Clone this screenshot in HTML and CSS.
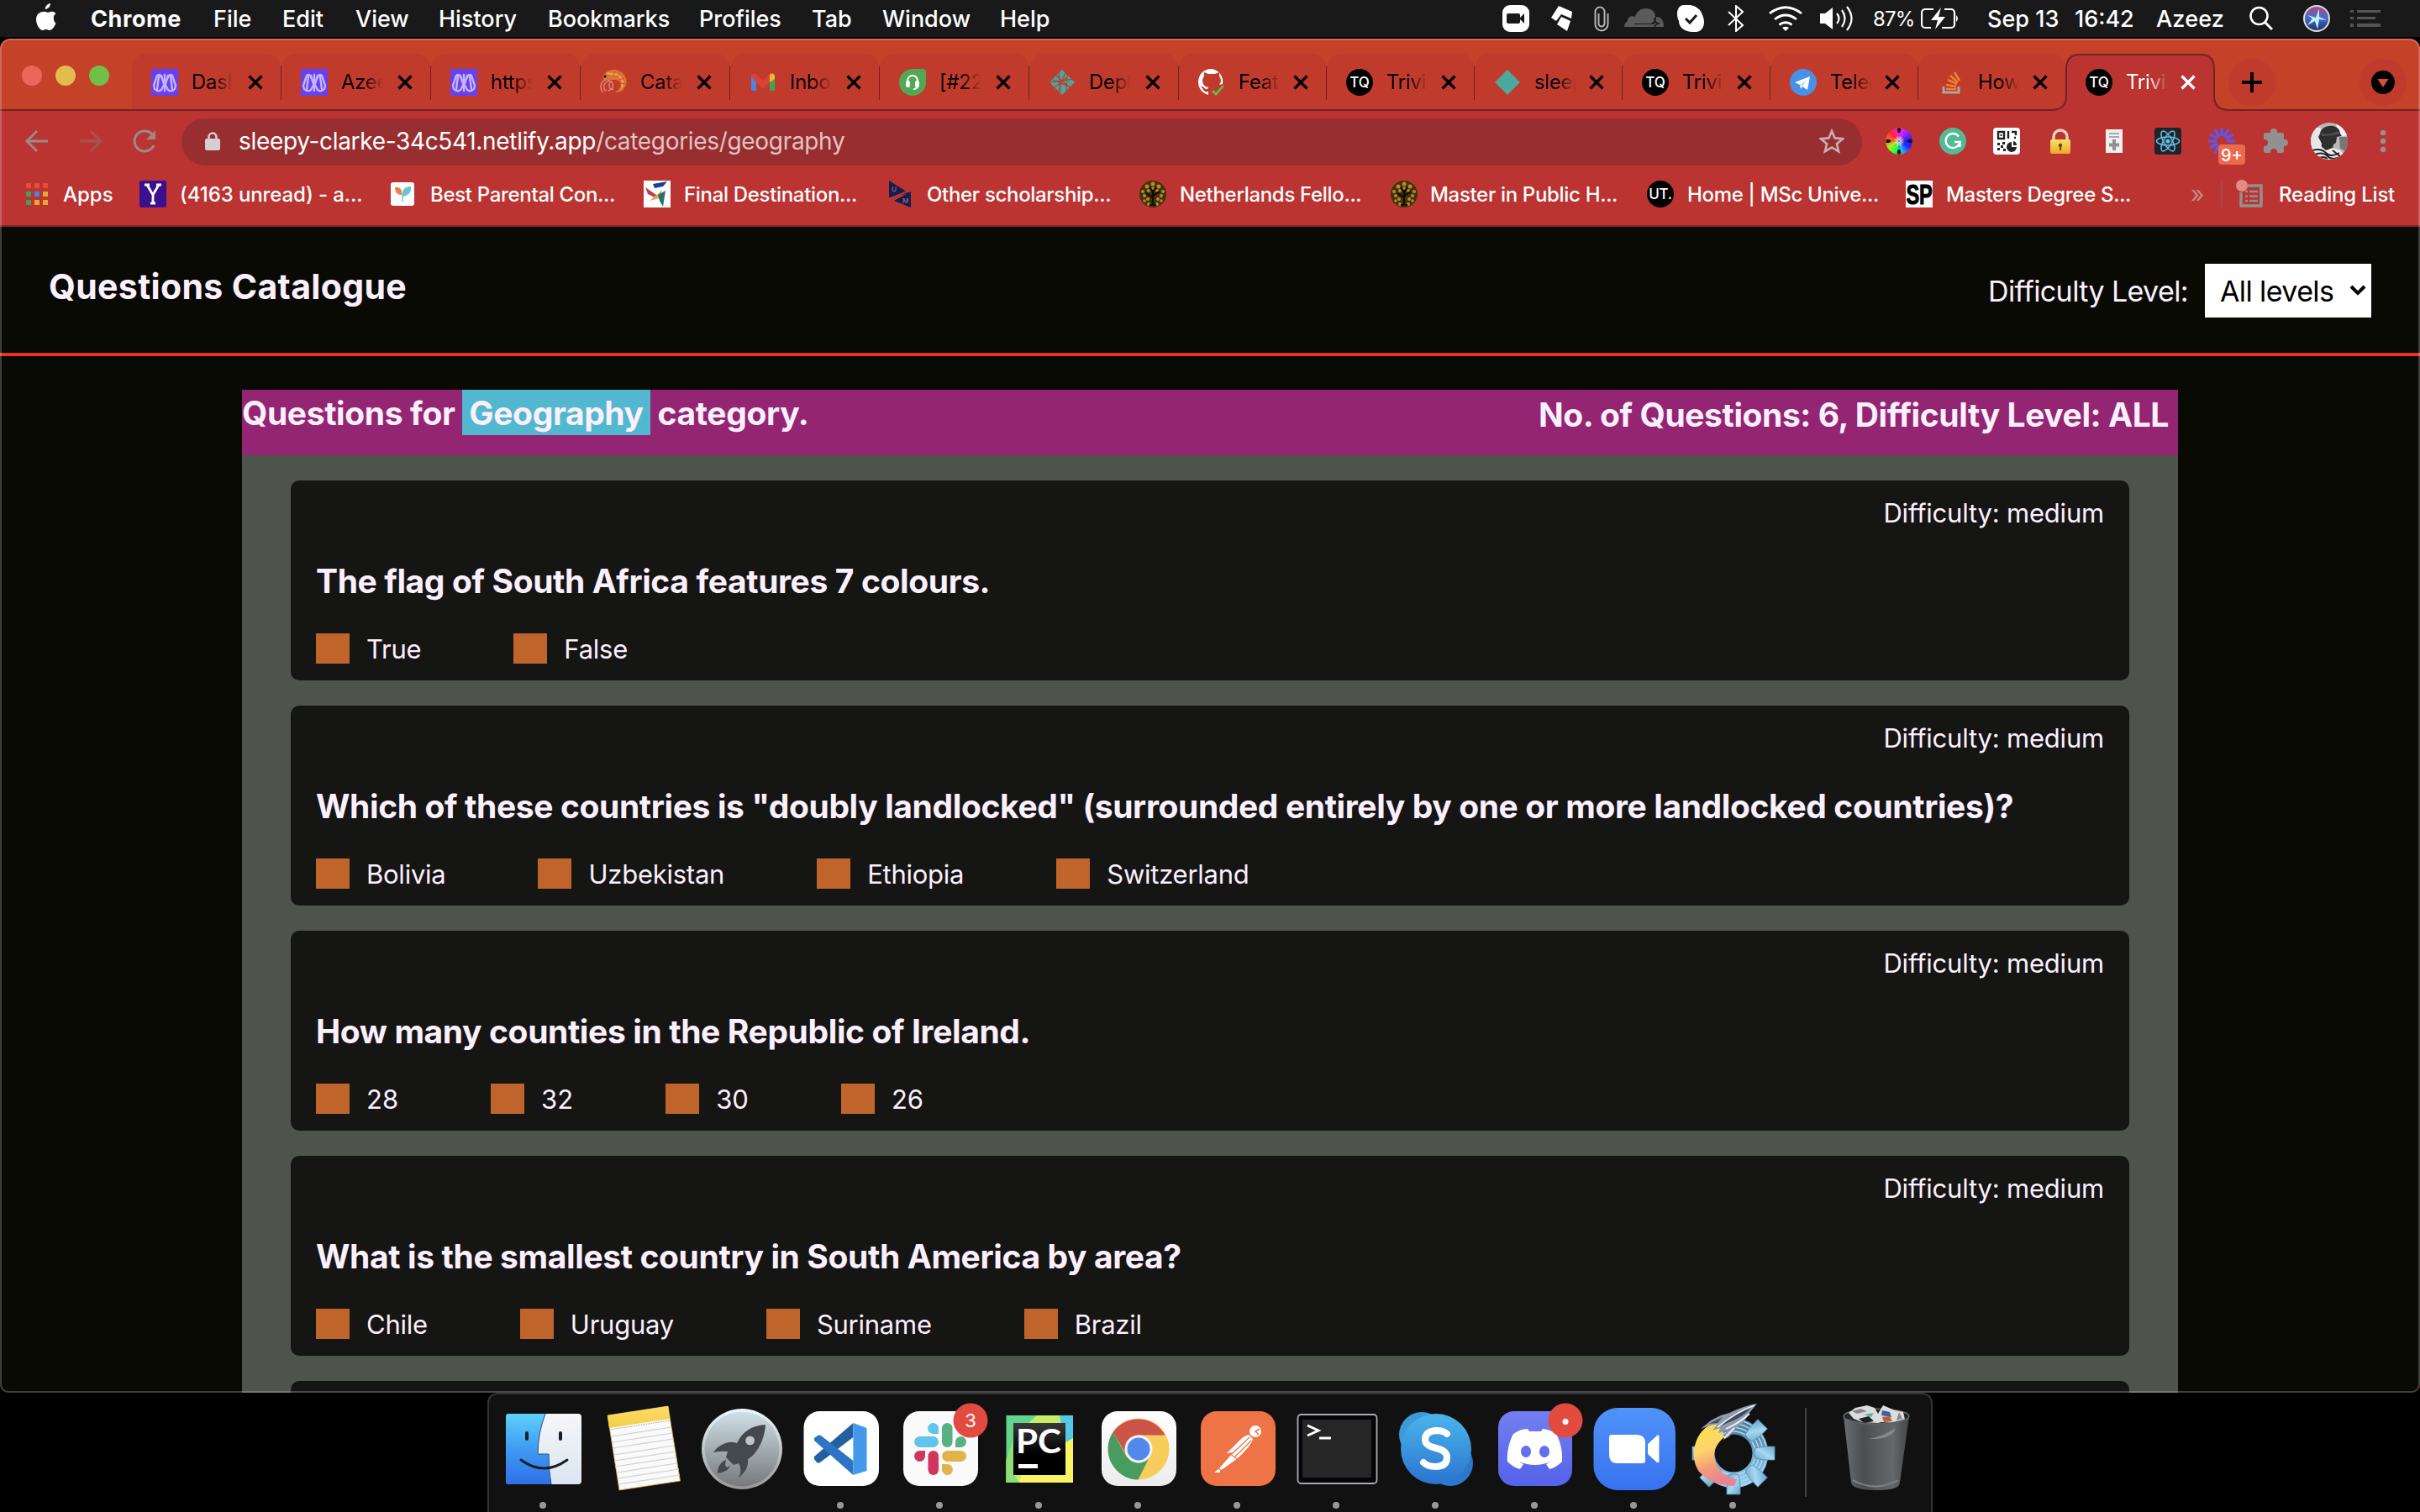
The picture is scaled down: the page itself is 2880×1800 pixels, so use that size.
FILE: index.html
```html
<!DOCTYPE html>
<html lang="en">
<head>
<meta charset="utf-8">
<title>Trivia Questions</title>
<link rel="stylesheet" href="styles.css">
</head>
<body>
<svg class="defs" width="0" height="0" aria-hidden="true">
  <defs>
    <linearGradient id="gFinderL" x1="0" y1="0" x2="0" y2="1"><stop offset="0" stop-color="#5fd0fa"/><stop offset=".5" stop-color="#3f9cf2"/><stop offset="1" stop-color="#2f6fe8"/></linearGradient>
    <linearGradient id="gFinderR" x1="0" y1="0" x2="0" y2="1"><stop offset="0" stop-color="#f6f6f8"/><stop offset="1" stop-color="#dbe5f1"/></linearGradient>
    <linearGradient id="gNotes" x1="0" y1="0" x2="0" y2="1"><stop offset="0" stop-color="#fbdc6c"/><stop offset="1" stop-color="#f6cd45"/></linearGradient>
    <linearGradient id="gLaunch" x1="0" y1="0" x2="0" y2="1"><stop offset="0" stop-color="#d0e0e8"/><stop offset="1" stop-color="#77797b"/></linearGradient>
    <linearGradient id="gLaunchRim" x1="0" y1="0" x2="0" y2="1"><stop offset="0" stop-color="#eaf8ff"/><stop offset="1" stop-color="#979797"/></linearGradient>
    <linearGradient id="gTile" x1="0" y1="0" x2="0" y2="1"><stop offset="0" stop-color="#fff"/><stop offset="1" stop-color="#ececec"/></linearGradient>
    <linearGradient id="gPc" x1="0" y1="0" x2="0" y2="1"><stop offset="0" stop-color="#383838"/><stop offset=".6" stop-color="#000"/></linearGradient>
    <linearGradient id="gSkype" x1="0" y1="0" x2="0" y2="1"><stop offset="0" stop-color="#4ab5ec"/><stop offset="1" stop-color="#2b74cf"/></linearGradient>
    <linearGradient id="gDiscord" x1="0" y1="0" x2="0" y2="1"><stop offset="0" stop-color="#737ff0"/><stop offset="1" stop-color="#5562ea"/></linearGradient>
    <linearGradient id="gZoom" x1="0" y1="0" x2="0" y2="1"><stop offset="0" stop-color="#4f93f8"/><stop offset="1" stop-color="#3872f0"/></linearGradient>
    <linearGradient id="gFlame" x1="0" y1="0" x2=".3" y2="1"><stop offset="0" stop-color="#fbe04a"/><stop offset=".45" stop-color="#fdd46c"/><stop offset=".75" stop-color="#f59a78"/><stop offset="1" stop-color="#ea8494"/></linearGradient>
    <linearGradient id="gTooth" x1="0" y1="0" x2="1" y2="1"><stop offset="0" stop-color="#6fa3c4"/><stop offset=".5" stop-color="#a4d8f3"/><stop offset="1" stop-color="#6ba4c8"/></linearGradient>
    <linearGradient id="gGear" x1="0" y1="0" x2="0" y2="1"><stop offset="0" stop-color="#4f7da0"/><stop offset="1" stop-color="#8fcbec"/></linearGradient>
    <linearGradient id="gBin" x1="0" y1="0" x2="1" y2="0"><stop offset="0" stop-color="#6b6f72"/><stop offset=".3" stop-color="#4a4e51"/><stop offset=".75" stop-color="#66696c"/><stop offset="1" stop-color="#434648"/></linearGradient>
    <linearGradient id="gLock" x1="0" y1="0" x2="0" y2="1"><stop offset="0" stop-color="#fbe06a"/><stop offset="1" stop-color="#eda923"/></linearGradient>
    <linearGradient id="gSiri" x1="0" y1="0" x2="0" y2="1"><stop offset="0" stop-color="#b8457f"/><stop offset=".5" stop-color="#3f6fd0"/><stop offset="1" stop-color="#1d2c60"/></linearGradient>
    <clipPath id="avatarClip"><circle cx="22" cy="22" r="22"/></clipPath>
  </defs>
  <symbol id="f-netlify-m" viewBox="0 0 32 32"><rect width="32" height="32" fill="#6740f2"/><g fill="none" stroke="#c3b5fb" stroke-width="2.400" stroke-linejoin="round" stroke-linecap="round"><path d="M7 8Q9 6 11 8L20 25Q24 28 28 24L29 20 25 8Q23 6 21 8L12 25Q8 28 4 24L3 20z"/><path d="M9 9L7 24M23 9l2 15M16 7v19M12 8l3 10M20 8l-3 10"/></g></symbol>
  <symbol id="f-tq" viewBox="0 0 32 32"><circle cx="16" cy="16" r="16"/><text x="16" y="22" text-anchor="middle" font-family="Inter,sans-serif" font-size="17" font-weight="500" fill="#fff">TQ</text></symbol>
  <symbol id="f-tree" viewBox="0 0 32 32"><circle cx="16" cy="16" r="16" fill="#41310f"/><g fill="#b68d22"><circle cx="9" cy="7" r="2.500"/><circle cx="16" cy="4" r="2.500"/><circle cx="23" cy="7" r="2.500"/><circle cx="4" cy="13" r="2"/><circle cx="28" cy="13" r="2"/><circle cx="11" cy="12" r="2"/><circle cx="21" cy="12" r="2"/><circle cx="16" cy="9" r="1.800"/><circle cx="6" cy="18" r="2"/><circle cx="26" cy="18" r="2"/><circle cx="10" cy="22" r="2"/><circle cx="22" cy="22" r="2"/><circle cx="6" cy="24" r="1.800"/><circle cx="26" cy="24" r="1.800"/><circle cx="11" cy="28" r="2"/><circle cx="21" cy="28" r="2"/></g><path d="M16 29V11M16 20l-8-5M16 18l8-5M16 14l-4-6M16 14l4-6M12 29h8" stroke="#120d04" stroke-width="2.200" fill="none"/></symbol>
  <symbol id="x" viewBox="0 0 20 20"><path d="M2.500 2.500l15 15M17.500 2.500l-15 15" stroke="currentColor" stroke-width="3.200" fill="none"/></symbol>
</svg>

<div class="desktop">
  <header class="menubar">
    <svg class="apple" viewBox="0 0 26 32"><path fill="#fff" d="M18 0c.3 3-2.700 7-6.200 7C11.400 3.800 14.800.4 18 0zM21.800 17c0-3.200 2.600-4.700 2.700-4.800-1.500-2.200-3.800-2.500-4.600-2.500-2-.2-3.800 1.100-4.800 1.100s-2.500-1.100-4.100-1.100C5.900 9.800 1 12.500 1 19.300 1 25.300 5.300 32 8.600 32c1.600 0 2.300-1.100 4.300-1.100s2.500 1.100 4.200 1.100c3.400 0 6.100-5.300 7.400-8.500-2-.9-2.700-3.600-2.700-6.500z"/></svg>
    <b>Chrome</b><span>File</span><span>Edit</span><span>View</span><span>History</span><span>Bookmarks</span><span>Profiles</span><span>Tab</span><span>Window</span><span>Help</span>
    <svg width="32" height="32" viewBox="0 0 32 32"><rect width="32" height="32" rx="9" fill="#fff"/><rect x="5" y="10" width="16" height="12" rx="2" fill="#191919"/><path d="M21 15l5-5v12l-5-5z" fill="#191919"/></svg>
    <svg width="26" height="32" viewBox="0 0 26 32"><path fill="#fff" d="M9 1l16 7-1 8-12-5-6 8-6-4zM12 14l11 5-4 12L7 23z"/></svg>
    <svg width="18" height="32" viewBox="0 0 18 32"><path d="M5.500 10v12a3.500 3.500 0 007 0V8a5.500 5.500 0 00-11 0v15a7.500 7.500 0 0015 0V10" fill="none" stroke="#b4b4b4" stroke-width="2"/></svg>
    <svg width="48" height="24" viewBox="0 0 48 24"><path fill="#5a5a5a" d="M0 22c0-4 2-6 4-7 0-4 3-7 9-5C15 3 20 0 26 0c6 0 11 4 11 9q0 6-5 9H12v1h22l6 3z"/><path fill="#5a5a5a" d="M38 10q9 0 9 12H37l-4-2q5-1 5-10z"/><path d="M36 11q0 7 6 7-6 1-6 5" fill="none" stroke="#191919" stroke-width="1.500"/></svg>
    <svg width="32" height="32" viewBox="0 0 32 32"><path fill="#fff" d="M7 0c10-2 21 3 23 12 4 8 2 19-7 20C11 33 2 28 2 19-2 11 0 1 7 0z"/><path d="M10 16l5 5 8-9" fill="none" stroke="#191919" stroke-width="3"/></svg>
    <svg width="20" height="32" viewBox="0 0 20 32"><path d="M1 8l17 16-8 7V1l8 7L1 24" fill="none" stroke="#fff" stroke-width="2"/></svg>
    <svg width="40" height="30" viewBox="0 0 40 30"><g fill="none" stroke="#fff" stroke-width="2.800"><path d="M1 9Q20-5.500 39 9"/><path d="M7 16q13-10 26 0"/><path d="M12.500 22.500q7.500-5.500 15 0"/></g><path d="M16 26q4-2.500 8 0l-4 4z" fill="#fff"/></svg>
    <svg width="40" height="30" viewBox="0 0 40 30"><path fill="#fff" d="M0 9h6l9-7v26l-9-7H0z"/><g fill="none" stroke="#fff" stroke-width="2.200"><path d="M20 9q5 6 0 12"/><path d="M26 5q7 10 0 20"/><path d="M32 1q11 14 0 28"/></g></svg>
    <span class="pct">87%</span>
    <svg width="46" height="26" viewBox="0 0 46 26"><g fill="none" stroke="#fff" stroke-width="2.200"><path d="M15 2H5a4 4 0 00-4 4v14a4 4 0 004 4h7M28 2h8a4 4 0 014 4v14a4 4 0 01-4 4H25"/></g><path fill="#fff" d="M24 0L12 15h8l-3 11 12-15h-8zM42 9q4 4 0 8z"/></svg>
    <span class="clock">Sep 13</span><span class="clock">16:42</span><span class="user">Azeez</span>
    <svg width="28" height="30" viewBox="0 0 28 30"><circle cx="11.500" cy="12" r="10" fill="none" stroke="#fff" stroke-width="2.600"/><path d="M18.500 19.500L27 28" stroke="#fff" stroke-width="3"/></svg>
    <svg width="32" height="32" viewBox="0 0 32 32"><circle cx="16" cy="16" r="15" fill="url(#gSiri)" stroke="#ddd" stroke-width="2"/><path d="M5 12l10 3 4-11v10l9 4-9-1-2 12-3-10-9 5 6-8z" fill="#bff0fa"/></svg>
    <svg width="36" height="20" viewBox="0 0 36 20"><path fill="#555" d="M0 0h4v3H0zM8 0h28v3H8zM0 8h4v3H0zM8 8h22v3H8zM0 16h4v4H0zM8 16h28v4H8z"/></svg>
  </header>

  <main class="window">
    <div class="tabstrip">
      <div class="lights"><i class="red"></i><i class="yellow"></i><i class="green"></i></div>
      <div class="tabs">
        <div class="tab wide first"><svg><use href="#f-netlify-m"/></svg><span>Dash</span><svg class="x"><use href="#x"/></svg></div>
        <div class="tab wide"><svg><use href="#f-netlify-m"/></svg><span>Azee</span><svg class="x"><use href="#x"/></svg></div>
        <div class="tab wide"><svg><use href="#f-netlify-m"/></svg><span>https</span><svg class="x"><use href="#x"/></svg></div>
        <div class="tab wide"><svg viewBox="0 0 32 32"><path d="M3 10C7 1 17-1 24 3c9 5 9 14 5 20-2 4-6 5-11 5 5-3 8-7 6-12-2-4-7-3-12-3-5-1-7 1-9-3z" fill="#dd7433"/><path d="M8 5c7 2 12-1 17 6 3 4 2 9 0 13" fill="none" stroke="#f3a15a" stroke-width="2"/><path d="M18 3l-2 5M24 5l-4 5M29 11l-6 2M30 18l-6-1M27 24l-4-3" stroke="#b9532a" stroke-width="1"/><circle cx="6" cy="9" r="1.500"/><path d="M8 12C0 15-1 24 4 28M11 13C4 17 2 24 8 26M14 14c-6 5-2 12 2 10M9 14c8 1 9 9 1 12" fill="none" stroke="#dc8a78" stroke-width="1.400"/></svg><span>Catal</span><svg class="x"><use href="#x"/></svg></div>
        <div class="tab wide"><svg viewBox="0 0 32 32"><path fill="#4a86e8" d="M2 9l6 5v12H4a2 2 0 01-2-2z"/><path fill="#3fa455" d="M30 9l-6 5v12h4a2 2 0 002-2z"/><path fill="#da4436" d="M2 9c0-4 3-4 5-3l9 8 9-8v9l-9 8-9-8z"/><path fill="#f0b829" d="M24 7c3-3 6-1 6 2v3l-6 4z"/></svg><span>Inbox</span><svg class="x"><use href="#x"/></svg></div>
        <div class="tab wide"><svg viewBox="0 0 32 32"><path fill="#52a855" d="M16 0h12a4 4 0 014 4v12A16 16 0 1116 0z"/><path d="M10 17v-3a6 6 0 0112 0v5q0 5-5 5" fill="none" stroke="#fff" stroke-width="2"/><rect x="8" y="14" width="5" height="8" rx="2" fill="#fff"/><rect x="19" y="14" width="5" height="8" rx="2" fill="#fff"/></svg><span>[#22</span><svg class="x"><use href="#x"/></svg></div>
        <div class="tab wide"><svg viewBox="0 0 32 32"><path fill="#4aa79c" d="M16 1l15 15-15 15L1 16z"/><path d="M9 8l16 14M1 16l30-4M7 22l15-12M12 3l2 25M20 4l-9 24M5 13l22 9M22 7l-1 20" stroke="#c13b2d" stroke-width="1.200"/></svg><span>Deplo</span><svg class="x"><use href="#x"/></svg></div>
        <div class="tab"><svg viewBox="0 0 32 32"><path fill="#fff" d="M12 31v-4c-5 1-6-2-7-4l-2-2c4-1 4 4 8 3l1-2c-5-1-7-4-7-9l2-5V4l5 2h8l5-2v4l2 5c0 3-1 5-2 6l4-1A15.500 15.500 0 0016 0C5 0 0 8 0 16c0 7 5 13 12 15z"/><path d="M17 26l4 4 9-10" fill="none" stroke="#58c04e" stroke-width="2.600"/></svg><span>Feat</span><svg class="x"><use href="#x"/></svg></div>
        <div class="tab"><svg><use href="#f-tq"/></svg><span>Trivia</span><svg class="x"><use href="#x"/></svg></div>
        <div class="tab"><svg viewBox="0 0 32 32"><path fill="#4ba99d" d="M16 1l15 15-15 15L1 16z"/></svg><span>sleep</span><svg class="x"><use href="#x"/></svg></div>
        <div class="tab"><svg><use href="#f-tq"/></svg><span>Trivia</span><svg class="x"><use href="#x"/></svg></div>
        <div class="tab"><svg viewBox="0 0 32 32"><circle cx="16" cy="16" r="16" fill="#4791e6"/><path fill="#fff" d="M6 16l18-7-3 16-6-4-2 3-1-5z"/><path d="M12 19l8-6-5 8" fill="#bcd8f6"/></svg><span>Teleg</span><svg class="x"><use href="#x"/></svg></div>
        <div class="tab last"><svg viewBox="0 0 32 32"><path d="M7 21v7h18v-7" fill="none" stroke="#a9a6a5" stroke-width="3"/><g stroke="#ee8035" stroke-width="2.600"><path d="M10 24h12M10 19l12 2M12 13l11 5M15 8l9 8M20 4l6 10"/></g></svg><span>How</span><svg class="x"><use href="#x"/></svg></div>
        <div class="tab active">
          <svg class="shape" viewBox="0 0 216 68"><path d="M0 68V66h4q16-1 16-16V18Q20 1 36 1h144q16 0 16 17v32q0 15 16 16h4v2z" fill="#bb3432"/><path d="M0 67h4q16-1 16-17V18Q20 1 36 1h144q16 0 16 17v32q0 16 16 17h4" fill="none" stroke="#6d2328" stroke-width="2"/></svg>
          <svg><use href="#f-tq"/></svg><span>Trivia</span><svg class="x"><use href="#x"/></svg></div>
      </div>
      <div class="round"><svg width="24" height="24" viewBox="0 0 24 24"><path d="M12 0v24M0 12h24" stroke="#000" stroke-width="4"/></svg></div>
      <div class="round end"><svg width="28" height="28" viewBox="0 0 28 28"><circle cx="14" cy="14" r="14"/><path d="M7.500 10h13L14 20z" fill="#dd4b3b"/></svg></div>
    </div>

    <div class="toolbar">
      <svg viewBox="0 0 32 32"><path d="M29 16H5M16 4L4 16l12 12" fill="none" stroke="#9a8a89" stroke-width="2.800"/></svg>
      <svg viewBox="0 0 32 32"><path d="M3 16h24M16 4l12 12-12 12" fill="none" stroke="#a55450" stroke-width="2.800"/></svg>
      <svg viewBox="0 0 32 32"><path d="M27 21a12 12 0 11-2-13" fill="none" stroke="#9a8a89" stroke-width="3"/><path d="M29 3v11H18z" fill="#9a8a89"/></svg>
      <div class="omnibox">
        <svg width="18" height="22" viewBox="0 0 18 22"><path d="M4.500 9V6a4.500 4.500 0 019 0v3" fill="none" stroke="#d5cccc" stroke-width="2.600"/><rect y="8" width="18" height="14" rx="2" fill="#d5cfcf"/></svg>
        <p>sleepy-clarke-34c541.netlify.app<span>/categories/geography</span></p>
        <svg width="30" height="30" viewBox="0 0 30 30"><path d="M15 3l3.600 8.400 9.400.8-7.100 6.100 2.200 9L15 22.400 6.900 27.300l2.200-9L2 12.200l9.400-.8z" fill="none" stroke="#c8b0b1" stroke-width="2.600"/></svg>
      </div>
      <div class="ext">
        <div class="wheel"><svg viewBox="0 0 32 32"><g stroke="#111" stroke-width="3"><path d="M16 1v5M16 26v5M1 16h5M26 16h5"/></g><g fill="#111"><circle cx="16" cy="2.500" r="2.200"/><circle cx="16" cy="29.500" r="2.200"/><circle cx="2.500" cy="16" r="2.200"/><circle cx="29.500" cy="16" r="2.200"/></g><path d="M16 7v18M7 16h18M10 10l12 12M22 10L10 22" stroke="#222" stroke-opacity=".35" stroke-width="1"/></svg></div>
        <svg viewBox="0 0 32 32"><circle cx="16" cy="16" r="16" fill="#52ba94"/><path d="M23 10.500A8.500 8.500 0 1024.500 17H18M24.500 17v6" fill="none" stroke="#fff" stroke-width="2.400"/></svg>
        <svg viewBox="0 0 32 32"><rect width="32" height="32" rx="4" fill="#fff"/><g fill="none" stroke="#222" stroke-width="2.400"><path d="M6 5h7v8H6zM18 4v9M22 5h5v4M25 12h2"/></g><path fill="#222" d="M8.500 8h2v2h-2zM5 18h3v3H5zM9 21h3v3H9zM5 24h3v3H5zM11 17h3v3h-3zM12 25h3v3h-3zM22 17v6h6a6 6 0 11-6-6zM24 16a5 5 0 014 5h-4z"/></svg>
        <svg viewBox="0 0 32 32"><path d="M8 16v-5a8 8 0 0116 0v5" fill="none" stroke="#e0d2bd" stroke-width="3.500"/><rect x="4" y="14" width="24" height="17" rx="2" fill="url(#gLock)"/><circle cx="16" cy="21" r="2.300" fill="#6b4a10"/><path d="M15 21h2v6h-2z" fill="#6b4a10"/></svg>
        <svg viewBox="0 0 32 32"><path d="M6 2h20v28H6z" fill="#f1efef"/><path d="M10 7h12M10 11h12" stroke="#aaa" stroke-width="2"/><path d="M16 14v13M10 20.500h12" stroke="#909090" stroke-width="4"/></svg>
        <svg viewBox="0 0 32 32"><rect width="32" height="32" rx="3" fill="#20232a"/><g fill="none" stroke="#61c4e6" stroke-width="1.500"><ellipse cx="16" cy="16" rx="13.500" ry="5"/><ellipse cx="16" cy="16" rx="13.500" ry="5" transform="rotate(60 16 16)"/><ellipse cx="16" cy="16" rx="13.500" ry="5" transform="rotate(120 16 16)"/></g><circle cx="16" cy="16" r="2.600" fill="#61c4e6"/></svg>
        <div class="burst"><svg viewBox="0 0 32 32"><path d="M16 0v10M8 2l5 9M2 8l9 5M0 16h10M2 24l9-5M8 30l5-9M24 2l-5 9M30 8l-9 5M32 16H22" stroke="#5f55ee" stroke-width="3.400"/></svg><em>9+</em></div>
        <svg viewBox="0 0 32 32"><path fill="#919191" d="M2 8q0-2 2-2h6V5a4 4 0 018 0v1h6q2 0 2 2v6h1a4 4 0 010 8h-1v6q0 2-2 2h-6v-1a4 4 0 00-8 0v1H4q-2 0-2-2v-6h1a4 4 0 000-8H2z"/></svg>
        <svg class="avatar" viewBox="0 0 44 44"><g clip-path="url(#avatarClip)"><path fill="#b9b9b9" d="M0 0h44v44H0z"/><path fill="#e6e6e6" d="M0 6l12 0 4 26H0z"/><path fill="#f4f4f4" d="M30 0h14v15l-12 2z"/><path fill="#777" d="M34 17h10v18l-9-4z"/><path fill="#2f2f2f" d="M11 13C12 3 29 0 34 9l1 4 2 3-6 1-1 7-3 2-1 5-7 4-7-2 1-8-4-8z"/><path fill="#4d4d4d" d="M12 12q8 4 20-2l3 3-8 2-14 1z"/><path fill="#eee" d="M0 30l12-2 6 5 8-3 9 3 9 11H0z"/><path d="M2 33q10-3 16 3t16 0M4 38q10-4 16 2t16 0M26 33l10 8M8 43q6-4 12 0" stroke="#222" stroke-width="2" fill="none"/></g></svg>
        <svg viewBox="0 0 32 32"><g fill="#979090"><circle cx="16" cy="6" r="3.200"/><circle cx="16" cy="16" r="3.200"/><circle cx="16" cy="26" r="3.200"/></g></svg>
      </div>
    </div>

    <nav class="bookmarks">
      <a class="apps"><svg viewBox="0 0 28 28"><path fill="#e84c3c" d="M1 1h6v6H1zM11 1h6v6h-6zM21 1h6v6h-6z"/><path fill="#3fa05a" d="M1 11h6v6H1zM1 21h6v6H1z"/><path fill="#4686e6" d="M11 11h6v6h-6z"/><path fill="#e9a52f" d="M21 11h6v6h-6zM11 21h6v6h-6zM21 21h6v6h-6z"/></svg>Apps</a>
      <a class="mail"><svg viewBox="0 0 32 32"><rect width="32" height="32" rx="2" fill="#3b108f"/><path d="M9 5l7 12 7-12M16 16v11M13 27h6M6 5h6M20 5h6" stroke="#fff" stroke-width="2.800" fill="none"/></svg>(4163 unread) - a...</a>
      <a><svg viewBox="0 0 32 32"><rect x="1" y="2" width="28" height="28" rx="3" fill="#fff"/><path d="M6 8c6-1 9 3 8 9-6 0-8-4-8-9z" fill="#e88346"/><path d="M25 7c-8 0-11 4-10 12 7-1 11-5 10-12z" fill="#6cc4cf"/><path d="M15 16v9" stroke="#6cc4cf" stroke-width="1.500"/></svg>Best Parental Con...</a>
      <a><svg viewBox="0 0 32 32"><path fill="#fff" d="M0 0h32v32H0z"/><path fill="#1c3f9e" d="M11 4l17-3-5 6-10 2z"/><path fill="#b8414b" d="M2 8l13 9-2 3-8-4z"/><path fill="#d8ab50" d="M7 24l11-9 4-4-3 10z"/><path fill="#2d6c6d" d="M17 17l9-5-3 19-4-7z"/></svg>Final Destination...</a>
      <a class="narrow"><svg viewBox="0 0 32 32"><path fill="#101e50" d="M2 0l24 15L2 20zM28 32L8 24l20-11z"/><path d="M2 22L28 11" stroke="#bb3432" stroke-width="2"/><text x="5" y="13" font-size="8" font-family="Inter,sans-serif" fill="#c15a72">U</text><text x="18" y="27" font-size="8" font-family="Inter,sans-serif" fill="#c15a72">M</text></svg>Other scholarship...</a>
      <a><svg><use href="#f-tree"/></svg>Netherlands Fello...</a>
      <a class="narrow"><svg><use href="#f-tree"/></svg>Master in Public H...</a>
      <a><svg viewBox="0 0 32 32"><circle cx="16" cy="16" r="16"/><text x="16" y="22" text-anchor="middle" font-family="Inter,sans-serif" font-size="17" fill="#fff">UT.</text></svg>Home | MSc Unive...</a>
      <a><svg viewBox="0 0 32 32"><path fill="#fff" d="M0 0h32v32H0z"/><text x="16" y="28" text-anchor="middle" textLength="31" lengthAdjust="spacingAndGlyphs" font-family="Liberation Sans,sans-serif" font-size="34" font-weight="700" stroke="#000" stroke-width="1">SP</text></svg>Masters Degree S...</a>
      <span class="more">»</span>
      <a class="reading"><svg viewBox="0 0 34 34"><path d="M14 7h16v24H6V15" fill="none" stroke="#949090" stroke-width="3.500"/><path d="M11 14h3M16 14h10M11 19.500h3M16 19.500h10M11 25h3M16 25h10" stroke="#949090" stroke-width="2.500"/><circle cx="7" cy="7" r="7" fill="#e58a84"/></svg>Reading List</a>
    </nav>

    <section class="page">
      <div class="page-head">
        <h1>Questions Catalogue</h1>
        <label>Difficulty Level:
          <span class="select"><select><option>All levels</option></select><svg width="20" height="14" viewBox="0 0 20 14"><path d="M2 2l8 8 8-8" fill="none" stroke="#000" stroke-width="4"/></svg></span>
        </label>
      </div>
      <div class="catalogue">
        <div class="summary">
          <h2>Questions for <mark>Geography</mark> category.</h2>
          <h3>No. of Questions: 6, Difficulty Level: ALL</h3>
        </div>
        <div class="list">
          <article><small>Difficulty: medium</small><h4>The flag of South Africa features 7 colours.</h4><ul><li>True</li><li>False</li></ul></article>
          <article><small>Difficulty: medium</small><h4>Which of these countries is "doubly landlocked" (surrounded entirely by one or more landlocked countries)?</h4><ul><li>Bolivia</li><li>Uzbekistan</li><li>Ethiopia</li><li>Switzerland</li></ul></article>
          <article><small>Difficulty: medium</small><h4>How many counties in the Republic of Ireland.</h4><ul class="numeric"><li>28</li><li>32</li><li>30</li><li>26</li></ul></article>
          <article><small>Difficulty: medium</small><h4>What is the smallest country in South America by area?</h4><ul><li>Chile</li><li>Uruguay</li><li>Suriname</li><li>Brazil</li></ul></article>
          <article></article>
        </div>
      </div>
    </section>
  </main>

  <footer class="dock">
    <div class="app on"><svg viewBox="0 0 118 140"><rect x="14" y="23" width="90" height="84" rx="4" fill="url(#gFinderR)"/><path d="M18 23h43q-9 24-9 48h13q0 20 3 36H18q-4 0-4-4V27q0-4 4-4z" fill="url(#gFinderL)"/><path d="M61 23q-9 24-9 48h13q0 20 3 36" fill="none" stroke="#24507e" stroke-width="1"/><path d="M39 46v7M79 46v7" stroke="#16202c" stroke-width="4" stroke-linecap="round"/><path d="M32 78q27 20 55 0" fill="none" stroke="#16202c" stroke-width="3" stroke-linecap="round"/></svg></div>
    <div class="app"><svg viewBox="0 0 118 140"><path d="M17 25l72-11 14.500 89L31 114z" fill="#fafafa" stroke="#c9a63a" stroke-width=".8"/><path d="M17 25l72-11 2.300 15L19 40z" fill="url(#gNotes)"/><path d="M19.500 42l72-11" stroke="#999" stroke-dasharray="1 1"/><g stroke="#cfcfcf" stroke-width="1.200"><path d="M21 50l72-11M22 57l72-11M23 64l72-11M24 72l72-11M25 79l73-11M26 86l73-11M28 93l72-11M29 100l73-11M30 107l73-11"/></g></svg></div>
    <div class="app"><svg viewBox="0 0 118 140"><circle cx="59" cy="65" r="48" fill="url(#gLaunchRim)"/><circle cx="59" cy="65" r="44.500" fill="url(#gLaunch)"/><path d="M87 36C70 37 60 44 53 58 44 54 31 60 25 69q9-2 17-1l-2 7 9 9 6-2q5 8 0 17C63 93 67 86 66 77 76 72 86 55 87 36z" fill="#44494d"/><circle cx="68.600" cy="55" r="6" fill="#bcc5c9" stroke="#2e3336" stroke-width="1"/><path d="M40 78C32 81 30 88 30 94c5-1 12-2 15-9l-4 2-2-3z" fill="#44494d"/></svg></div>
    <div class="app on"><svg viewBox="0 0 118 140"><rect x="14.500" y="20" width="89.500" height="89" rx="19" fill="#fff"/><path d="M73.400 34v17L34 81q-2 1-4 0l-3-4v-3z" fill="#22609f"/><path d="M27 55v-3l4-3q2-1 4 0l38.400 30v17z" fill="#2d75c4"/><path d="M73.400 34l16.100 6v51l-16.100 5z" fill="#4498e9"/></svg></div>
    <div class="app on"><svg viewBox="0 0 118 140"><rect x="15" y="20" width="89" height="89" rx="19" fill="#fafafa"/><path fill="#62c3ed" d="M57 47h-6.500a6.500 6.500 0 116.500-6.500z"/><rect x="28" y="50" width="29" height="13" rx="6.500" fill="#62c3ed"/><rect x="61" y="34" width="12.500" height="29" rx="6.250" fill="#57b183"/><path fill="#57b183" d="M77 63v-6.500a6.500 6.500 0 116.500 6.500z"/><rect x="61" y="67" width="29" height="13" rx="6.500" fill="#e3b34b"/><path fill="#e3b34b" d="M61 83h6.500a6.500 6.500 0 11-6.500 6.500z"/><rect x="44.500" y="67" width="12.500" height="29" rx="6.250" fill="#cf375d"/><path fill="#cf375d" d="M41 67v6.500a6.500 6.500 0 11-6.500-6.500z"/><circle cx="95" cy="31" r="20.500" fill="#e24c40"/><text x="95" y="39" text-anchor="middle" font-family="Inter,sans-serif" font-size="22" fill="#fff">3</text></svg></div>
    <div class="app on"><svg viewBox="0 0 118 140"><path fill="#62d48d" d="M19.500 25H99v80H19.500z"/><path fill="#c8ec6a" d="M56 25h28l8 28-56 52H19.500V78L34 45z"/><path fill="#56c8e5" d="M83 25h16v28l-10 5z"/><path fill="#f9f463" d="M99 52v53H35l4-14 50-33z"/><path fill="#8edc77" d="M19.500 77L29 50v45l6 10H19.500z"/><rect x="28" y="34" width="62" height="62" fill="url(#gPc)"/><text x="31" y="70" textLength="54" lengthAdjust="spacingAndGlyphs" font-family="Lato,sans-serif" font-size="40" font-weight="700" fill="#fff">PC</text><path fill="#fff" d="M34 83h23v5H34z"/></svg></div>
    <div class="app on"><svg viewBox="0 0 118 140"><rect x="15" y="20" width="89" height="89" rx="19" fill="url(#gTile)"/><circle cx="59" cy="65" r="36.500" fill="#f7cd5b"/><path fill="#cb5648" d="M90.600 48.500H59L44.500 72 28.500 45A36.500 36.500 0 0190.600 48.500z"/><path fill="#489c60" d="M28.500 45l16.100 29L59 81.500l13.500-8L58.500 101.500A36.500 36.500 0 0128.500 45z"/><circle cx="59" cy="65" r="16.500" fill="#f3f3f3"/><circle cx="59" cy="65" r="13.500" fill="#5489ec"/></svg></div>
    <div class="app on"><svg viewBox="0 0 118 140"><rect x="15" y="20" width="89" height="89" rx="19" fill="#ee7346"/><circle cx="80" cy="44" r="7" fill="#fff"/><path d="M85 41l-5 3 4 4" fill="none" stroke="#ee7346" stroke-width="1.500"/><path fill="#fff" d="M72 48l5 5q-2 8-17 22l-5 4L38 91v2h-7l6-5 14-16 3-3-8 1 13-13q7-8 13-9z"/><path d="M73 51L52 71M75 55L55 75M49 70l9 7M36 88l4 3" stroke="#ee7346" stroke-width="1.200"/></svg></div>
    <div class="app on"><svg viewBox="0 0 118 140"><rect x="12.500" y="24" width="94" height="82" rx="4" fill="#050505" stroke="#a8adb5" stroke-width="1.800"/><rect x="18" y="30" width="82" height="69" fill="#262626"/><path d="M24 37l13 6-13 6" fill="none" stroke="#fff" stroke-width="3"/><path d="M38 52h14" stroke="#fff" stroke-width="3"/></svg></div>
    <div class="app on"><svg viewBox="0 0 118 140"><circle cx="42" cy="48" r="27" fill="#3a9bd8"/><circle cx="76" cy="82" r="27" fill="#2c78cc"/><circle cx="59" cy="65" r="42" fill="url(#gSkype)"/><path d="M72 47Q68 43 59 43q-13 1-13 11 0 7 13 10t13 11q0 11-14 11-9 0-14-5" fill="none" stroke="#fff" stroke-width="8" stroke-linecap="round"/></svg></div>
    <div class="app on"><svg viewBox="0 0 118 140"><rect x="15" y="20" width="88" height="89" rx="19" fill="url(#gDiscord)"/><path fill="#fff" fill-rule="evenodd" d="M50 41q-9 0-17 6c-5 9-8 22-7 33q7 7 15 9l4-6-5-3q19 8 37 0l-5 3 4 6q8-2 15-9c1-11-2-24-7-33q-7-5-16-6l-2 3H52zM48 61a6 7 0 10.010 0zM70 61a6 7 0 10.010 0z"/><circle cx="95" cy="31" r="20.500" fill="#e24c40"/><circle cx="95" cy="32.500" r="3.500" fill="#fff"/></svg></div>
    <div class="app on"><svg viewBox="0 0 118 140"><rect x="10.500" y="16" width="97.500" height="98" rx="29" fill="url(#gZoom)"/><path fill="#fff" d="M32 48h29q11 0 11 10v21q0 3-3 3H39q-10 0-10-10V51q0-3 3-3zM75 59l11-10q2-2 2.500 1v30q-.5 2-2.500 1L75 71z"/></svg></div>
    <div class="app on"><svg viewBox="0 0 118 140"><circle cx="59" cy="70" r="32" fill="none" stroke="url(#gGear)" stroke-width="19"/><g fill="none" stroke="#a9daf3" stroke-width="1.500"><circle cx="59" cy="70" r="26"/><circle cx="59" cy="70" r="30.500"/><circle cx="59" cy="70" r="35"/><circle cx="59" cy="70" r="39.500"/></g><path id="tooth" d="M53 96q6-3 12 0l2 11v12H51v-12z" fill="url(#gTooth)" stroke="#5689aa" stroke-width=".8"/><use href="#tooth" transform="rotate(45 59 70)"/><use href="#tooth" transform="rotate(90 59 70)"/><use href="#tooth" transform="rotate(225 59 70)"/><use href="#tooth" transform="rotate(270 59 70)"/><use href="#tooth" transform="rotate(315 59 70)"/><path d="M32 36C10 46 6 80 20 94q14 15 40 15l3-8C40 98 24 70 48 51L44 36z" fill="url(#gFlame)"/><path fill="#8f9cae" d="M87 11Q70 14 54 22L44 25 32 31 20 41q10-4 20-6l-6 8 9-3-2 6 10-3-4 11 7-4 8-10q12-8 15-17z"/><path fill="#3f4b5e" d="M80 16Q66 20 50 31l-9 8 13-6q15-5 26-17zM30 35l16-8-6 7z"/><path d="M84 13Q64 20 40 39M78 23Q66 34 50 41M60 40L48 52" fill="none" stroke="#eef1f6" stroke-width="1.800"/></svg></div>
    <div class="divider"></div>
    <div class="app"><svg viewBox="0 0 118 140"><path d="M20 26l9 79q2 9 30 9t28-9l11-79z" fill="url(#gBin)"/><ellipse cx="59" cy="26" rx="39" ry="9" fill="#25282a" stroke="#777c80" stroke-width="1.200"/><path fill="#dcdcdc" d="M26 22l8-6 14-3 9 3 4 7 6-10 14 6 10 2 2 9-10 4-18-1-4 1-19-1-10-4z"/><path fill="#888" d="M30 20l10-3 8 3-12 3zM86 21l4 8-7 2z"/><path fill="#222" d="M38 29l12-3 6 6-12 2z"/><path fill="#58b7a0" d="M44 24l12-2-3 5z"/><path fill="#3f5f9e" d="M66 19l9 2 2 6-12-2z"/><path fill="#b8603c" d="M66 27l9-1 3 6-10 1z"/><path d="M21 29q38 14 76 0" fill="none" stroke="#5b5f62" stroke-width="2"/><path d="M50 53q15-2 32-13-4 14-32 13z" fill="#85888b"/><path d="M31 102q27 15 54 0" fill="none" stroke="#808487" stroke-width="2"/></svg></div>
  </footer>
</div>
</body>
</html>
```
FILE: styles.css
```css
* { box-sizing: border-box; }
body { margin: 0; background: #000; font-family: Inter, "Liberation Sans", sans-serif; }
h1, h2, h3, h4, p, ul { margin: 0; padding: 0; }
.defs { display: block; width: 0; height: 0; }

.desktop { width: 2880px; height: 1800px; display: flex; flex-direction: column; overflow: hidden; background: #000; }

/* Menu bar */
.menubar {
  flex: none; height: 44px; margin-bottom: 2px; padding-left: 42px; background: #191919; color: #fff;
  display: grid; align-items: center; white-space: nowrap;
  grid-template-columns: 66px 146px 82px 87px 99px 130px 180px 134px 84px 140px 598px 58px 51px 36px 63px 60px 49px 61px 63px 57px 79px 104px 97px 111px 64px 56px 40px;
  font-size: 27px; letter-spacing: 0; font-weight: 500;
}
.menubar b { font-weight: 700; letter-spacing: 0.6px; }
.menubar svg { display: block; }
.menubar .apple { width: 26px; height: 32px; margin-top: -4px; }
.menubar .pct { font-size: 24px; font-weight: 400; letter-spacing: -0.8px; }
.menubar .clock { letter-spacing: 0; }
.menubar .user { letter-spacing: 0.2px; }

/* Browser window */
.window { position: relative; flex: none; height: 1612px; display: flex; flex-direction: column; border-radius: 12px 12px 10px 10px; overflow: hidden; background: #c54128; }
.window::after { content: ""; position: absolute; inset: 0; border-radius: inherit; border: 2px solid rgba(255, 255, 255, .22); pointer-events: none; }

.tabstrip { flex: none; height: 86px; display: flex; border-bottom: 2px solid #6d2328; }
.lights { width: 157px; padding: 32px 0 0 26px; display: flex; gap: 16px; }
.lights i { width: 24px; height: 24px; border-radius: 50%; }
.red { background: #ee655b; }
.yellow { background: #e1bd4d; }
.green { background: #70bf49; }
.tabs { display: flex; padding-top: 18px; height: 86px; }
.tab { position: relative; width: 176px; height: 66px; padding: 2px 0 0 23px; display: flex; align-items: center; background: #c13b2d; border-radius: 18px 18px 0 0; font-size: 24px; }
.tab.wide { width: 178px; }
.tab svg { width: 32px; height: 32px; flex: none; }
.tab span { width: 51px; margin-left: 16px; overflow: hidden; white-space: nowrap; letter-spacing: -0.3px; -webkit-mask-image: linear-gradient(90deg, #000 50%, transparent 98%); mask-image: linear-gradient(90deg, #000 50%, transparent 98%); line-height: 32px; }
.tab svg.x { width: 20px; height: 20px; margin-left: 13px; }
.tab.wide svg.x { margin-left: 15px; }
.tab::after { content: ""; position: absolute; right: -1px; top: 15px; width: 2px; height: 40px; background: #6d2320; }
.tab.last::after, .tab.active::after { display: none; }
.tab.active { color: #fff; background: none; z-index: 1; }
.tab svg.shape { position: absolute; left: -20px; top: 0; width: 216px; height: 68px; z-index: -1; }
.round { width: 56px; height: 56px; margin: 24px 0 0 17px; border-radius: 50%; background: #c13b2d; display: flex; align-items: center; justify-content: center; }
.round.end { margin-left: auto; margin-right: 16px; }

.toolbar { flex: none; height: 74px; padding: 8px 0 8px 28px; background: #bb3432; display: flex; align-items: center; gap: 32px; }
.toolbar > svg { width: 32px; height: 32px; flex: none; margin-top: -2px; }
.omnibox { flex: none; width: 2000px; height: 56px; margin-left: -4px; padding: 0 21px 2px 28px; border-radius: 28px; background: #992e30; display: flex; align-items: center; }
.omnibox p { flex: 1; margin-left: 22px; font-size: 28px; letter-spacing: -0.32px; color: #fff; }
.omnibox p span { color: #e0c3c4; }
.ext { display: flex; gap: 32px; align-items: center; margin: -2px 0 0 -4px; }
.ext > * { width: 32px; height: 32px; flex: none; }
.ext .avatar { width: 44px; height: 44px; margin: 0 -6px; }
.wheel { background: radial-gradient(circle, rgba(255, 255, 255, .9) 0 8%, transparent 30%), conic-gradient(#f2d, #a2f, #22f, #22f, #2af, #2f4, #ae2, #f62, #f24, #f2d); -webkit-mask: radial-gradient(circle, #000 0 15.5px, transparent 16px); mask: radial-gradient(circle, #000 0 15.5px, transparent 16px); }
.wheel svg { display: block; width: 32px; height: 32px; }
.burst { position: relative; }
.burst svg { display: block; width: 32px; height: 32px; }
.burst em { position: absolute; left: 12px; top: 20px; width: 32px; height: 24px; border-radius: 4px; background: #ec6a4c; color: #fff; font: 500 20px/26px Inter, sans-serif; text-align: center; }

.bookmarks {
  flex: none; height: 64px; padding: 0 0 12px 30px; background: #bb3432; border-bottom: 2px solid #832528; color: #fff;
  display: grid; align-items: center; white-space: nowrap; font-size: 24px; font-weight: 500; letter-spacing: -0.32px;
  grid-template-columns: 136px 298px 302px 290px 300px 299px 305px 308px 339px 36px 230px;
}
.bookmarks a { display: flex; align-items: center; }
.bookmarks a svg { width: 32px; height: 32px; margin-right: 16px; flex: none; }
.bookmarks .apps { letter-spacing: 0; }
.bookmarks .apps svg { width: 28px; height: 28px; margin-right: 17px; }
.bookmarks .mail { letter-spacing: -0.1px; }
.bookmarks .narrow svg { margin-right: 15px; }
.bookmarks .more { color: #c08c88; font-size: 28px; font-weight: 400; }
.bookmarks .reading { border-left: 2px solid #a44a47; padding-left: 16px; height: 32px; letter-spacing: -0.2px; }
.bookmarks .reading svg { width: 34px; height: 34px; margin-right: 17px; }

/* Web page */
.page { flex: 1; background: #0a0a04; color: #fbf0fd; overflow: hidden; }
.page-head { height: 154px; border-bottom: 4px solid #e93323; padding: 44px 58px 0; display: flex; justify-content: space-between; align-items: flex-start; }
.page-head h1 { font-size: 41px; line-height: 54px; font-weight: 700; letter-spacing: 0.35px; }
.page-head label { display: flex; align-items: center; gap: 20px; font-size: 34px; letter-spacing: -0.6px; }
.select { width: 198px; height: 64px; background: #fff; display: flex; align-items: center; padding: 0 6px 0 18px; }
.select select { appearance: none; flex: 1; width: 150px; padding: 0; border: 0; background: none; color: #000; font: inherit; letter-spacing: inherit; }
.catalogue { width: 2304px; height: 1300px; margin: 40px auto 0; background: #4e534b; }
.summary { height: 78px; padding-right: 11px; background: #932572; display: flex; justify-content: space-between; }
.summary h2, .summary h3 { font-size: 39px; font-weight: 700; letter-spacing: -0.37px; line-height: 56px; white-space: nowrap; }
.summary h3 { line-height: 60px; letter-spacing: -0.41px; }
.summary mark { display: inline-block; height: 54px; padding: 0 8px; background: #52b8d0; color: inherit; }
.list { padding: 30px 58px 0; display: flex; flex-direction: column; gap: 30px; }
.list article { flex: none; height: 238px; padding: 19px 30px; border-radius: 10px; background: #151513; display: flex; flex-direction: column; }
.list small { align-self: flex-end; font-size: 31px; line-height: 40px; letter-spacing: -0.2px; }
.list h4 { margin-top: 36px; font-size: 39px; line-height: 50px; font-weight: 700; letter-spacing: -0.38px; white-space: nowrap; }
.list ul { margin-top: 36px; display: flex; gap: 110px; list-style: none; font-size: 31px; letter-spacing: -0.25px; line-height: 40px; }
.list ul.numeric { letter-spacing: 0; }
.list li { display: flex; align-items: center; gap: 20px; height: 40px; }
.list li::before { content: ""; width: 40px; height: 36px; margin-top: -2px; background: #bf652b; }

/* Dock */
.dock { flex: none; width: 1720px; height: 144px; margin: 0 auto; padding-left: 6px; border: 2px solid #333; border-bottom: 0; border-radius: 12px 12px 0 0; background: #111; display: flex; }
.app { position: relative; flex: none; width: 118px; height: 140px; }
.app svg { display: block; width: 118px; height: 140px; }
.app.on::after { content: ""; position: absolute; left: 54px; top: 128px; width: 8px; height: 8px; border-radius: 50%; background: #999; }
.divider { flex: none; width: 2px; height: 106px; margin: 16px 24px 0 26px; background: #444; }
```
